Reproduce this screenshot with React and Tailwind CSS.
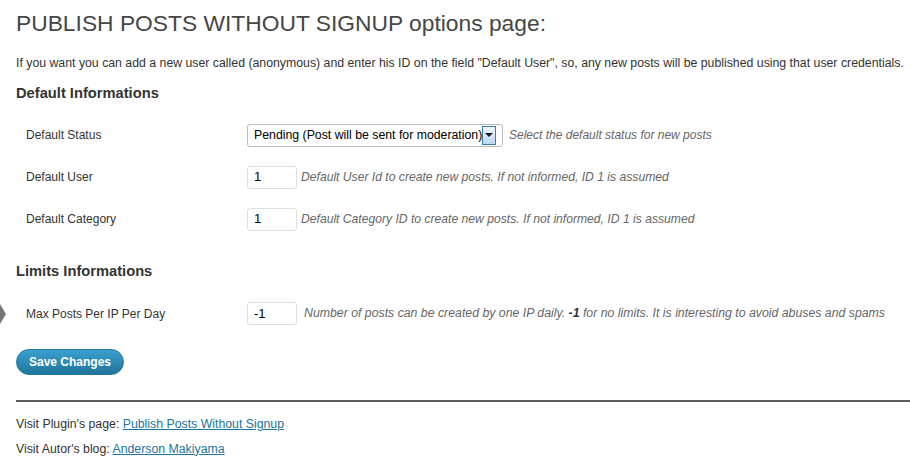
import React from 'react';

const rows = [
  {
    label: 'Default Status',
    type: 'select',
    value: 'Pending (Post will be sent for moderation)',
    help: 'Select the default status for new posts',
  },
  {
    label: 'Default User',
    value: '1',
    help: 'Default User Id to create new posts. If not informed, ID 1 is assumed',
  },
  {
    label: 'Default Category',
    value: '1',
    help: 'Default Category ID to create new posts. If not informed, ID 1 is assumed',
  },
];

const Field = ({ row }) => (
  <div className="flex items-center h-[42px]">
    <div className="w-[231px] pl-[10px] text-[12px] text-[#333]">{row.label}</div>
    {row.type === 'select' ? (
      <>
        <div className="flex items-center h-[23px] w-[256px] border border-[#bbb] rounded-[3px] bg-white pl-[6px] pr-[6px]">
          <span className="flex-1 text-[12.3px] text-black whitespace-nowrap">{row.value}</span>
          <span className="w-[16px] h-[19px] border border-[#3d7bad] bg-gradient-to-b from-[#eef5fc] to-[#bcd8f1] flex items-center justify-center">
            <span className="w-0 h-0 border-l-[4px] border-r-[4px] border-t-[4px] border-l-transparent border-r-transparent border-t-[#1a1a1a]" />
          </span>
        </div>
        <span className="ml-[6px] text-[12px] italic text-[#666]">{row.help}</span>
      </>
    ) : (
      <>
        <div className="flex items-center h-[23px] w-[50px] border border-[#dfdfdf] rounded-[3px] bg-white pl-[6px] text-[13px] text-black">
          {row.value}
        </div>
        <span className="ml-[4px] text-[12.15px] italic text-[#666]">{row.help}</span>
      </>
    )}
  </div>
);

export default function App() {
  return (
    <div
      className="relative w-[910px] h-[460px] bg-white pl-[16px] pt-[9px] text-[#333] overflow-hidden"
      style={{ fontFamily: '"Liberation Sans", Arial, sans-serif' }}
    >
      <h2 className="text-[22.8px] leading-[29px] text-[#464646]">PUBLISH POSTS WITHOUT SIGNUP options page:</h2>

      <p className="mt-[17px] text-[12.3px] leading-[16px] whitespace-nowrap">
        If you want you can add a new user called (anonymous) and enter his ID on the field "Default User", so, any new posts will be published using that user credentials.
      </p>

      <h3 className="mt-[11px] text-[14.7px] font-bold text-[#333]">Default Informations</h3>

      <div className="mt-[10px]">
        {rows.map((row) => (
          <Field key={row.label} row={row} />
        ))}
      </div>

      <h3 className="mt-[20px] text-[14.7px] font-bold text-[#333]">Limits Informations</h3>

      <div className="mt-[11px] flex items-center h-[41px]">
        <div className="w-[231px] pl-[10px] text-[12px]">Max Posts Per IP Per Day</div>
        <div className="flex items-center h-[23px] w-[50px] border border-[#dfdfdf] rounded-[3px] bg-white pl-[6px] text-[13px] text-black">
          -1
        </div>
        <span className="ml-[7px] text-[12.3px] italic text-[#666] whitespace-nowrap">
          Number of posts can be created by one IP daily. <b className="text-[#333]">-1</b> for no limits. It is interesting to avoid abuses and spams
        </span>
      </div>

      {/* small collapse arrow on the left edge */}
      <span className="absolute left-0 top-[304px] w-0 h-0 border-t-[10px] border-b-[10px] border-l-[6px] border-t-transparent border-b-transparent border-l-[#777]" />

      <button className="mt-[15px] h-[26px] px-[12px] rounded-full bg-gradient-to-b from-[#3a9fd0] to-[#21759b] border border-[#21759b] text-white text-[12px] font-bold">
        Save Changes
      </button>

      <div className="mt-[25px] h-[2px] bg-[#5a5a5a]" />

      <p className="mt-[13px] text-[12.3px]">
        Visit Plugin's page: <a className="text-[#21759b] underline" href="#">Publish Posts Without Signup</a>
      </p>
      <p className="mt-[6px] text-[12.3px]">
        Visit Autor's blog: <a className="text-[#21759b] underline" href="#">Anderson Makiyama</a>
      </p>
    </div>
  );
}
